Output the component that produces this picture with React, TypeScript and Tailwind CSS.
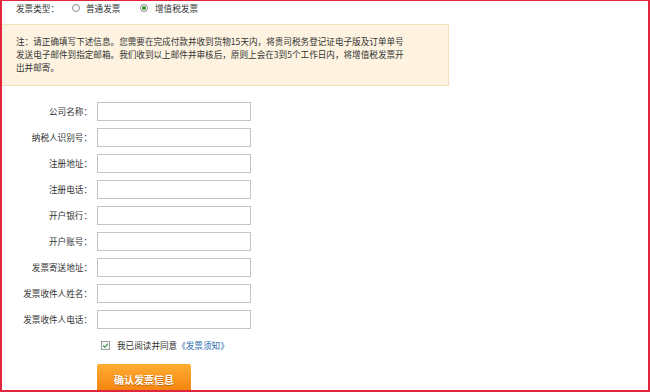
const fields = [
  "公司名称：",
  "纳税人识别号：",
  "注册地址：",
  "注册电话：",
  "开户银行：",
  "开户账号：",
  "发票寄送地址：",
  "发票收件人姓名：",
  "发票收件人电话：",
];

function Radio({ checked }: { checked?: boolean }) {
  return (
    <span className="relative flex size-[8px] shrink-0 items-center justify-center rounded-full border border-[#8a8a8a] bg-white">
      {checked && <span className="size-[4px] rounded-full bg-[#3d9a3d]" />}
    </span>
  );
}

function InvoiceType() {
  return (
    <div className="flex h-[14px] items-center text-[8.6px] leading-none text-[#333]">
      <span className="ml-[14px] w-[56px]">发票类型：</span>
      <Radio />
      <span className="ml-[6px] w-[54px]">普通发票</span>
      <Radio checked />
      <span className="ml-[7px]">增值税发票</span>
    </div>
  );
}

function Notice() {
  return (
    <div className="mt-[9px] w-[447px] border-y border-r border-[#f3dfbb] bg-[#fdf3e0] pb-[11px] pl-[14px] pt-[10px]">
      <p className="text-[8.6px] leading-[13px] text-[#333] whitespace-nowrap">
        注：请正确填写下述信息。您需要在完成付款并收到货物15天内，将贵司税务登记证电子版及订单单号
        <br />
        发送电子邮件到指定邮箱。我们收到以上邮件并审核后，原则上会在3到5个工作日内，将增值税发票开
        <br />
        出并邮寄。
      </p>
    </div>
  );
}

function Field({ label }: { label: string }) {
  return (
    <div className="flex items-center gap-[5px]">
      <span className="w-[90px] text-right text-[8.6px] leading-none text-[#333]">{label}</span>
      <div className="h-[19px] w-[154px] border border-[#c4c4c4] bg-white" />
    </div>
  );
}

function Agree() {
  return (
    <div className="ml-[99px] mt-[10px] flex h-[12px] items-center text-[8.6px] leading-none">
      <span className="flex size-[9px] items-center justify-center border border-[#9a9a9a] bg-[#f4f6f8]">
        <svg viewBox="0 0 8 8" className="size-[7px]" fill="none">
          <path d="M1.2 4.2 L3.2 6 L6.8 1.8" stroke="#2e8b2e" strokeWidth="1.3" />
        </svg>
      </span>
      <span className="ml-[7px] text-[#333]">我已阅读并同意</span>
      <span className="text-[#2f6fb3]">《发票须知》</span>
    </div>
  );
}

export default function App() {
  return (
    <div
      className="relative h-[392px] w-[650px] overflow-hidden border-b-2 border-l-2 border-r-2 border-t border-[#e1253d] bg-white"
      style={{ fontFamily: '"Noto Sans CJK SC", "Noto Sans", sans-serif' }}
    >
      <InvoiceType />
      <Notice />
      <div className="mt-[16px] flex flex-col gap-[7px]">
        {fields.map((f) => (
          <Field key={f} label={f} />
        ))}
      </div>
      <Agree />
      <div className="ml-[95px] mt-[13px] flex h-[30px] w-[94px] items-center justify-center rounded-[2px] bg-gradient-to-b from-[#ffad33] to-[#f37f00] text-[10px] font-bold text-white [text-shadow:0_1px_0_#c86400]">
        确认发票信息
      </div>
    </div>
  );
}
